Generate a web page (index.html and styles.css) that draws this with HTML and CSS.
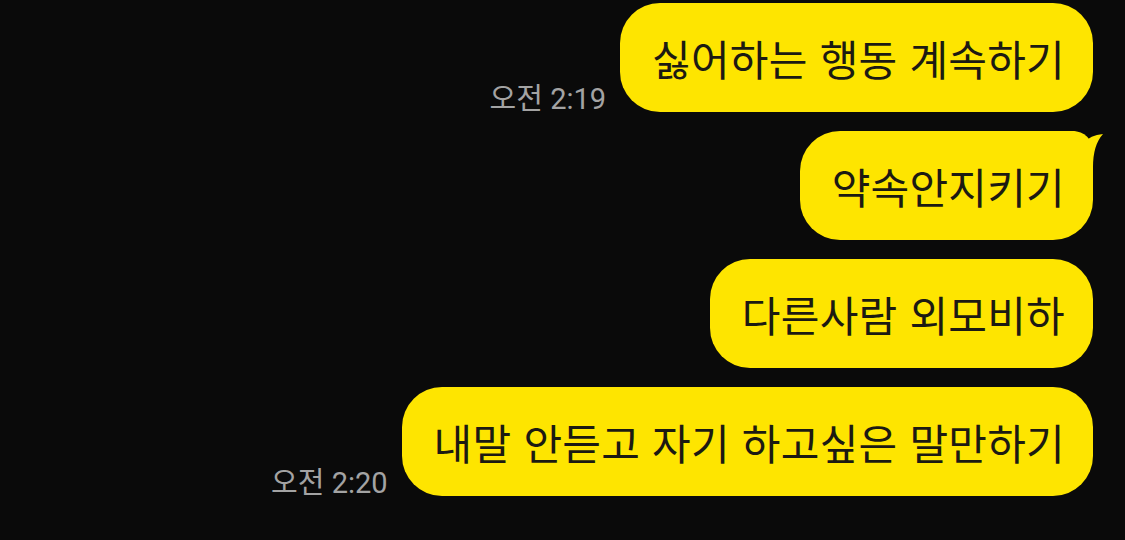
FILE: index.html
```html
<!DOCTYPE html>
<html lang="ko">
<head>
    <meta charset="UTF-8">
    <meta name="viewport" content="width=device-width, initial-scale=1.0">
    <title>채팅</title>
    <link rel="stylesheet" href="styles.css">
</head>
<body>
    <!-- Chat log -->
    <div class="chat">
        <div class="msg-row">
            <span class="msg-time">오전 2:19</span>
            <div class="bubble"><span class="bubble-text">싫어하는 행동 계속하기</span></div>
        </div>
        <div class="msg-row">
            <div class="bubble bubble-tail">
                <svg class="tail" width="50" height="50" viewBox="0 0 50 50">
                    <path d="M0 0 L19 0 Q25 1 29 12 Q35 4 48 3 Q38 14 38 36 L38 50 L0 50 Z" fill="#fee500"/>
                </svg>
                <span class="bubble-text">약속안지키기</span>
            </div>
        </div>
        <div class="msg-row">
            <div class="bubble"><span class="bubble-text">다른사람 외모비하</span></div>
        </div>
        <div class="msg-row">
            <span class="msg-time">오전 2:20</span>
            <div class="bubble"><span class="bubble-text">내말 안듣고 자기 하고싶은 말만하기</span></div>
        </div>
    </div>
</body>
</html>
```

FILE: styles.css
```css
/* Page */
body {
    margin: 0;
    background-color: #0a0a0a;
    font-family: "Noto Sans CJK KR", "Noto Sans", sans-serif;
}
/* Chat log */
.chat {
    display: flex;
    flex-direction: column;
    gap: 19px;
    padding: 3px 32px 0 0;
}
.msg-row {
    display: flex;
    justify-content: flex-end;
    align-items: flex-end;
}
.msg-time {
    color: #a3a3a3;
    font-family: Roboto, "Noto Sans CJK KR", sans-serif;
    font-size: 29px;
    margin: 0 14px -2px 0;
    line-height: 1;
}
/* Bubbles */
.bubble {
    position: relative;
    background-color: #fee500;
    color: #1c1a12;
    height: 109px;
    box-sizing: border-box;
    display: flex;
    align-items: center;
    padding: 0 28px 0 32px;
    border-radius: 40px;
    font-size: 42px;
    letter-spacing: 0.25px;
    white-space: nowrap;
}
.bubble-text {
    position: relative;
}
.bubble-tail {
    border-top-right-radius: 20px;
}
.tail {
    position: absolute;
    top: 0;
    right: -12px;
}
```
